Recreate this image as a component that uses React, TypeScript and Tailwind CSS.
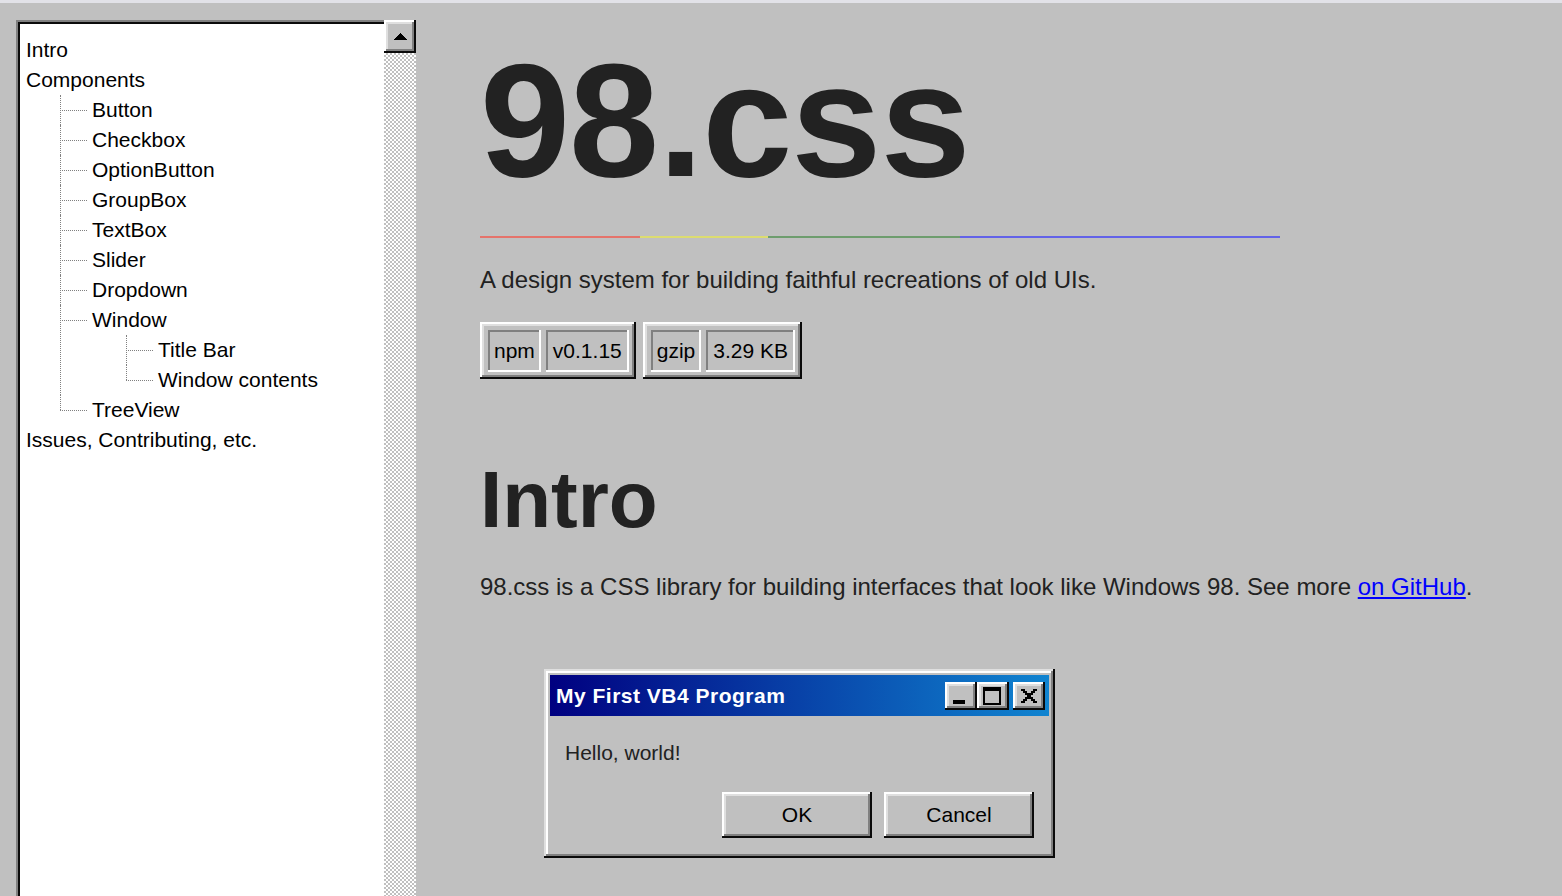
import React from 'react';

const raised =
  'shadow-[inset_-2px_-2px_#0a0a0a,inset_2px_2px_#fff,inset_-4px_-4px_#808080,inset_4px_4px_#dfdfdf]';
const windowEdge =
  'shadow-[inset_-2px_-2px_#0a0a0a,inset_2px_2px_#dfdfdf,inset_-4px_-4px_#808080,inset_4px_4px_#fff]';
const field = 'shadow-[inset_-2px_-2px_#fff,inset_2px_2px_#808080]';

function Node({ label, last, children }: { label: string; last?: boolean; children?: React.ReactNode }) {
  return (
    <li className="relative pl-[32px]">
      <span
        className={`absolute left-0 top-0 w-0 border-l border-dotted border-[#808080] ${last ? 'h-[15px]' : 'h-full'}`}
      />
      <span className="absolute left-0 top-[15px] w-[27px] h-0 border-t border-dotted border-[#808080]" />
      <div className="h-[30px] leading-[30px] whitespace-nowrap">{label}</div>
      {children}
    </li>
  );
}

function Badge({ name, value }: { name: string; value: string }) {
  return (
    <div className={`flex gap-[5px] pl-[8px] pt-[8px] pr-[7px] pb-[7px] bg-[#c0c0c0] ${raised}`}>
      <span className={`h-[42px] px-[6px] leading-[42px] ${field}`}>{name}</span>
      <span className={`h-[42px] px-[7px] leading-[42px] ${field}`}>{value}</span>
    </div>
  );
}

function TitleButton({ kind }: { kind: 'min' | 'max' | 'close' }) {
  if (kind === 'min')
    return (
      <button className={`w-[32px] h-[28px] bg-[#c0c0c0] flex items-end pl-[8px] pb-[6px] ${raised}`}>
        <svg width="12" height="4" viewBox="0 0 6 2" shapeRendering="crispEdges">
          <rect width="6" height="2" fill="#000" />
        </svg>
      </button>
    );
  if (kind === 'max')
    return (
      <button className={`w-[32px] h-[28px] bg-[#c0c0c0] flex items-start pl-[6px] pt-[5px] ${raised}`}>
        <svg width="18" height="18" viewBox="0 0 9 9" shapeRendering="crispEdges">
          <path fillRule="evenodd" d="M9 0H0v9h9V0zM8 2H1v6h7V2z" fill="#000" />
        </svg>
      </button>
    );
  return (
    <button className={`ml-[4px] w-[32px] h-[28px] bg-[#c0c0c0] flex items-start pl-[8px] pt-[7px] ${raised}`}>
      <svg width="16" height="14" viewBox="0 0 8 7" shapeRendering="crispEdges">
        <path
          fillRule="evenodd"
          d="M0 0h2v1h1v1h2V1h1V0h2v1H7v1H6v1H5v1h1v1h1v1h1v1H6V6H5V5H3v1H2v1H0V6h1V5h1V4h1V3H2V2H1V1H0V0z"
          fill="#000"
        />
      </svg>
    </button>
  );
}

export default function App() {
  return (
    <div className="h-screen overflow-hidden bg-[#c0c0c0] border-t-[3px] border-[#e2e2e8] flex font-['Liberation_Sans',Arial,sans-serif] text-[#222]">
      {/* sidebar tree view */}
      <aside className="ml-4 mt-[17px] w-[400px] h-[876px] flex shrink-0">
        <div className="flex-1 border-l-2 border-t-2 border-[#808080]">
          <div className="h-full border-l-2 border-t-2 border-[#0a0a0a] bg-white pl-[6px] pt-[11px] text-[21px] text-black">
            <ul>
              <li className="h-[30px] leading-[30px]">Intro</li>
              <li>
                <div className="h-[30px] leading-[30px]">Components</div>
                <ul className="ml-[34px]">
                  <Node label="Button" />
                  <Node label="Checkbox" />
                  <Node label="OptionButton" />
                  <Node label="GroupBox" />
                  <Node label="TextBox" />
                  <Node label="Slider" />
                  <Node label="Dropdown" />
                  <Node label="Window">
                    <ul className="ml-[34px]">
                      <Node label="Title Bar" />
                      <Node label="Window contents" last />
                    </ul>
                  </Node>
                  <Node label="TreeView" last />
                </ul>
              </li>
              <li className="h-[30px] leading-[30px]">Issues, Contributing, etc.</li>
            </ul>
          </div>
        </div>
        <div className="w-[32px] flex flex-col">
          <button className={`h-[33px] bg-[#c0c0c0] flex items-center justify-center ${raised}`}>
            <svg width="14" height="7" viewBox="0 0 14 7" shapeRendering="crispEdges">
              <path d="M7 0L14 7H0z" fill="#000" />
            </svg>
          </button>
          <div className="flex-1 bg-[repeating-conic-gradient(#c0c0c0_0_25%,#fff_0_50%)] bg-[length:4px_4px]" />
        </div>
      </aside>

      {/* main content */}
      <main className="ml-[64px] w-[1040px] shrink-0">
        <h1 className="mt-[36px] text-[162px] leading-none font-bold tracking-[-1px]">98.css</h1>
        <div className="mt-[35px] w-[800px] h-[2px] flex">
          <div className="w-[160px] bg-[#e5736b]" />
          <div className="w-[128px] bg-[#dcdc70]" />
          <div className="w-[192px] bg-[#6e9d6e]" />
          <div className="w-[320px] bg-[#6262e8]" />
        </div>
        <p className="mt-[27px] text-[24px] leading-[30px]">
          A design system for building faithful recreations of old UIs.
        </p>
        <div className="mt-[27px] flex gap-[7px] text-[21px] text-black">
          <Badge name="npm" value="v0.1.15" />
          <Badge name="gzip" value="3.29 KB" />
        </div>

        <h2 className="mt-[81px] text-[80px] leading-none font-bold">Intro</h2>
        <p className="mt-[32px] text-[24px] leading-[30px]">
          98.css is a CSS library for building interfaces that look like Windows 98. See more{' '}
          <a href="#" className="text-[#0000ff] underline">
            on GitHub
          </a>
          .
        </p>

        <div className={`mt-[67px] ml-[64px] w-[511px] p-[6px] bg-[#c0c0c0] ${windowEdge}`}>
          <div className="h-[41px] pl-[6px] pr-[4px] flex items-center justify-between bg-[linear-gradient(90deg,#000080,#1084d0)]">
            <span className="text-white font-bold text-[21px] tracking-[0.5px]">My First VB4 Program</span>
            <div className="flex">
              <TitleButton kind="min" />
              <TitleButton kind="max" />
              <TitleButton kind="close" />
            </div>
          </div>
          <div className="px-[15px] pt-[22px] pb-[14px] text-[21px]">
            <p className="leading-[30px]">Hello, world!</p>
            <div className="mt-[24px] flex justify-end gap-[12px] text-black">
              <button className={`w-[150px] h-[46px] bg-[#c0c0c0] ${raised}`}>OK</button>
              <button className={`w-[150px] h-[46px] bg-[#c0c0c0] ${raised}`}>Cancel</button>
            </div>
          </div>
        </div>
      </main>
    </div>
  );
}
